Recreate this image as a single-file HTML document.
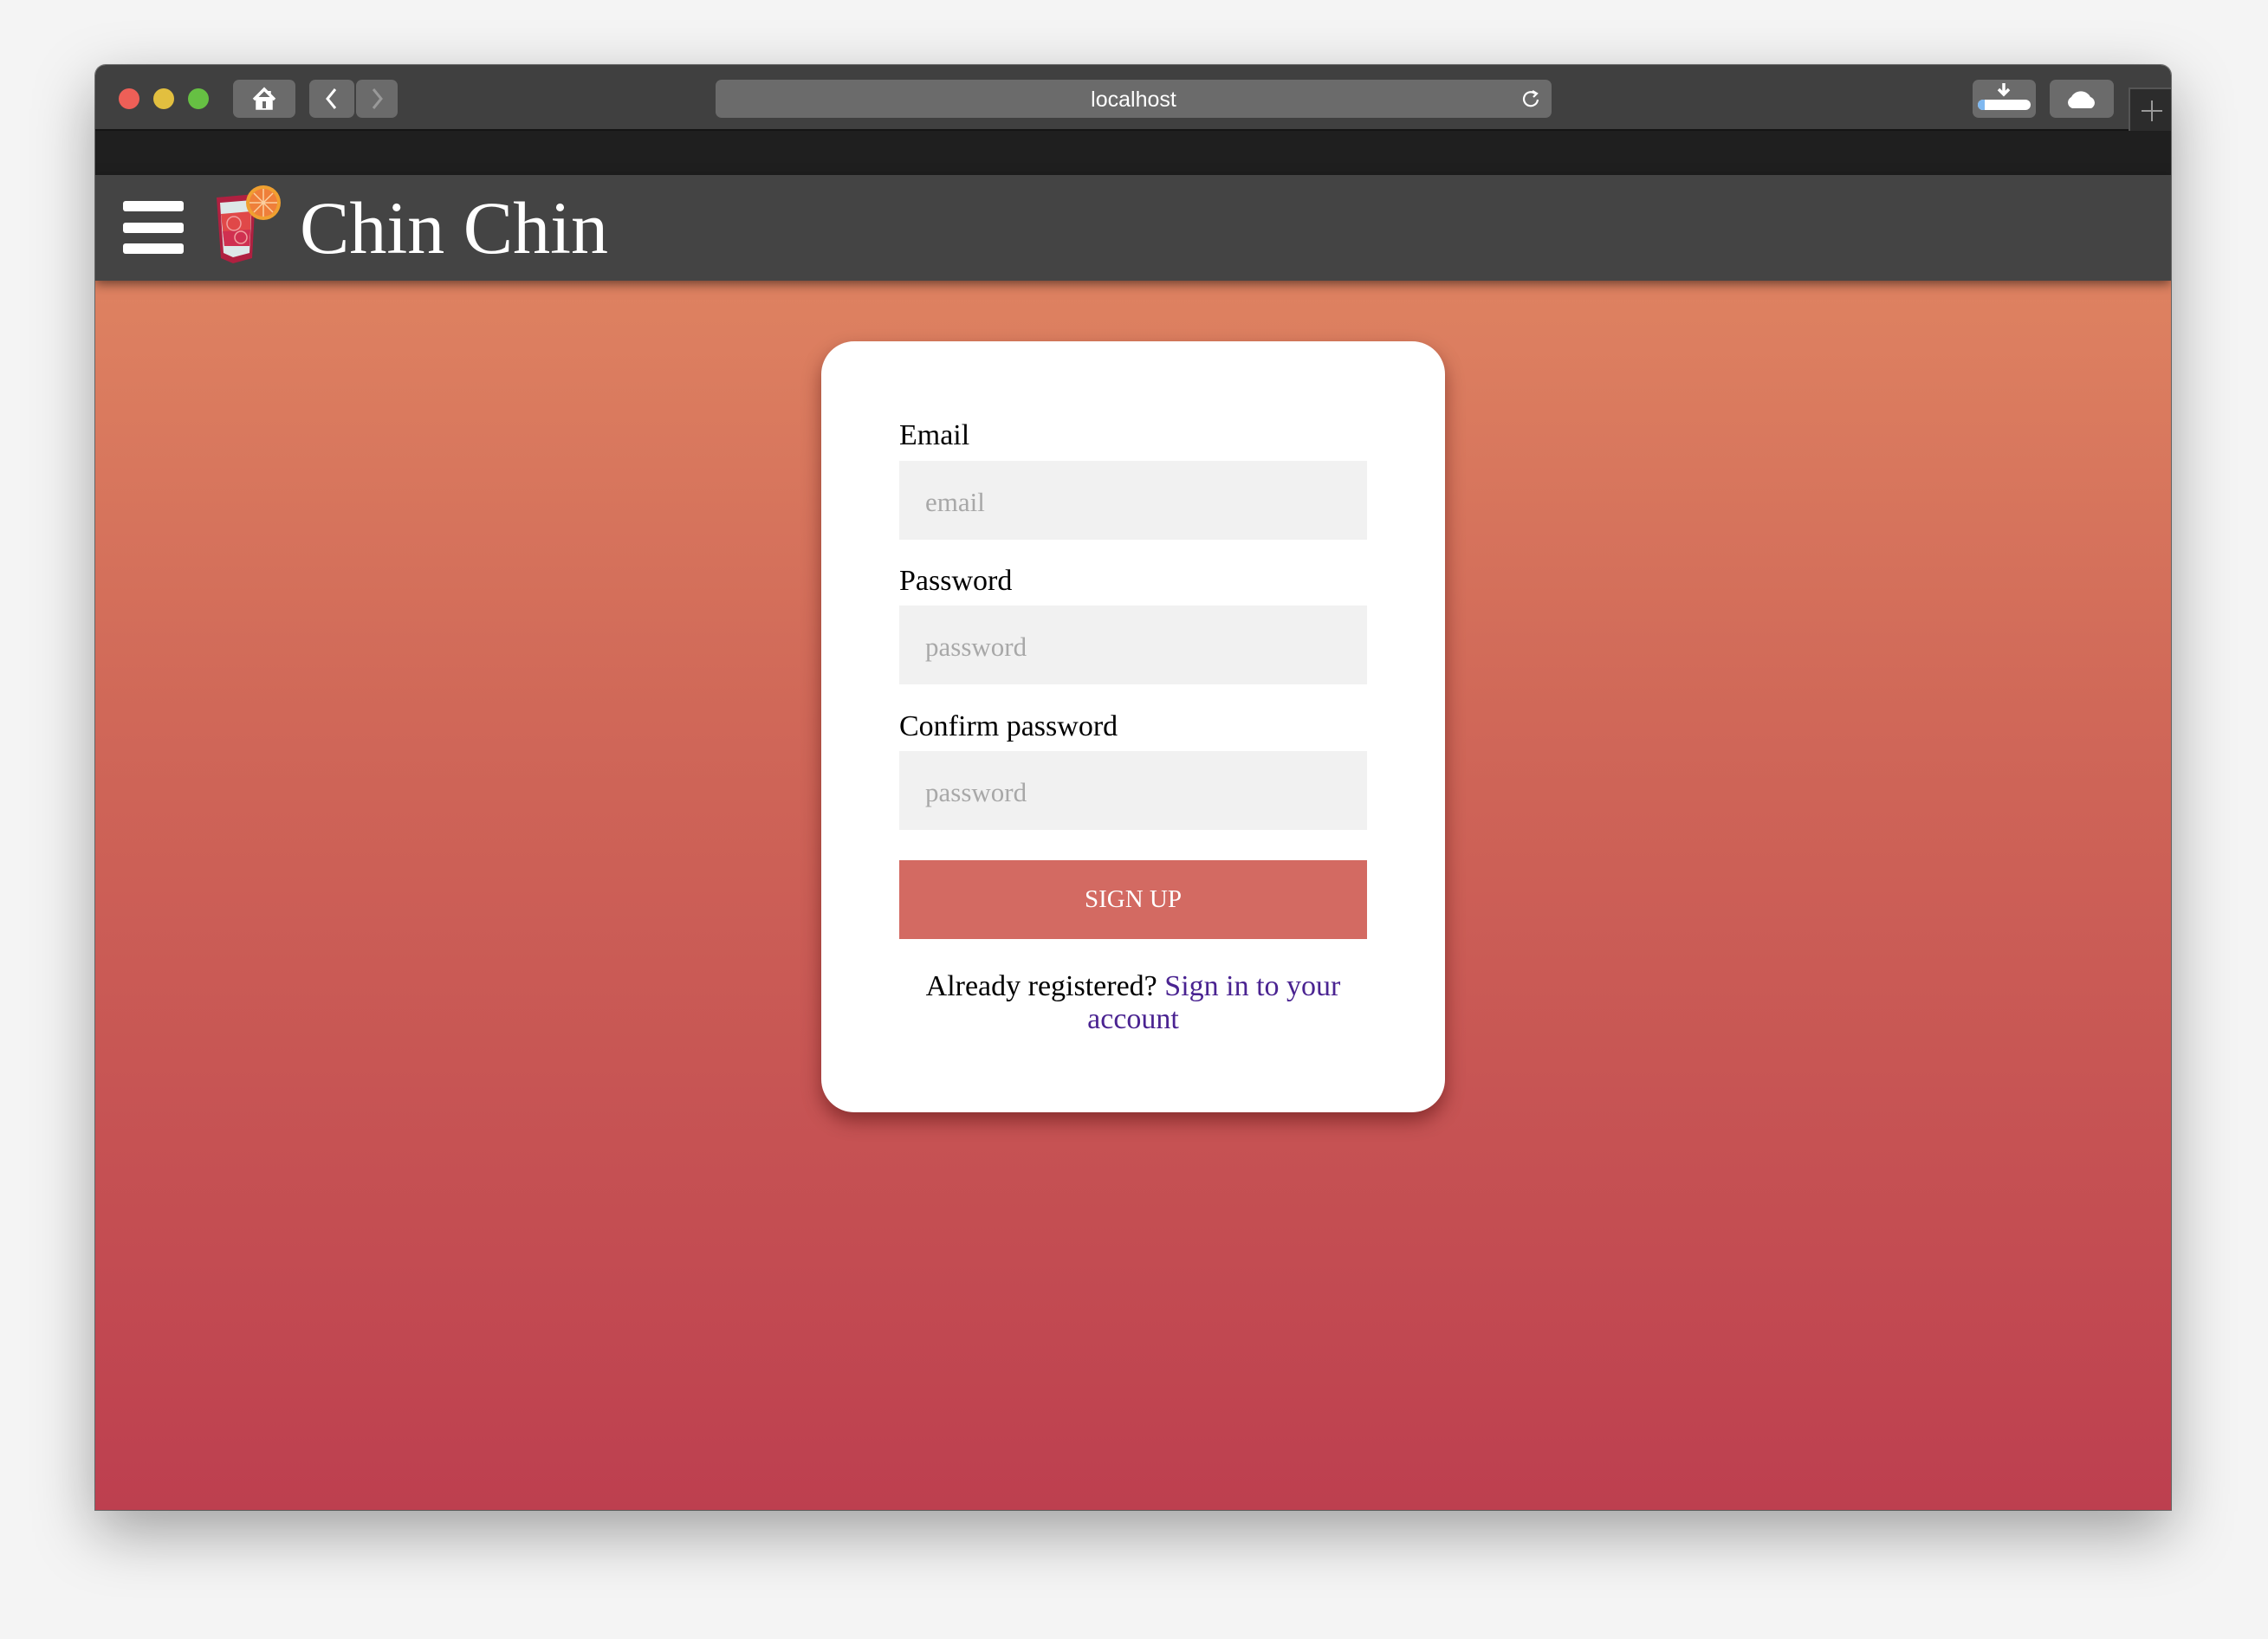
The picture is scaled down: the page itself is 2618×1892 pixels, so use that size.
<!DOCTYPE html>
<html><head><meta charset="utf-8"><style>
*{margin:0;padding:0;box-sizing:border-box}
body{width:2618px;height:1892px;background:#f4f4f4;position:relative;overflow:hidden;font-family:"Liberation Serif",serif}
.win{position:absolute;left:110px;top:75px;width:2396px;height:1668px;border-radius:12px 12px 0 0;overflow:hidden;box-shadow:0 25px 70px rgba(0,0,0,.35),0 0 0 1px rgba(0,0,0,.5)}
.tb{position:absolute;left:0;top:0;width:100%;height:76px;background:#404040;border-bottom:2px solid #151515}
.dot{position:absolute;top:27px;width:24px;height:24px;border-radius:50%}
.btn{position:absolute;top:17px;height:44px;background:#6b6b6b;border-radius:7px}
.black{position:absolute;left:0;top:76px;width:100%;height:51px;background:#1f1f1f}
.hdr{position:absolute;left:0;top:127px;width:100%;height:122px;background:#444;box-shadow:0 4px 12px rgba(0,0,0,.5);z-index:2}
.bg{position:absolute;left:0;top:249px;width:100%;height:1419px;background:linear-gradient(#de8261,#d06858 35%,#bd3f4f)}
.bar{position:absolute;left:32px;width:70px;height:12px;background:#fff;border-radius:3px}
.card{position:absolute;left:838px;top:70px;width:720px;height:890px;background:#fff;border-radius:38px;box-shadow:0 10px 22px rgba(60,0,0,.45)}
.lbl{position:absolute;left:90px;font-size:34px;color:#000}
.inp{position:absolute;left:90px;width:540px;height:91px;background:#f1f1f1;font-size:31px;color:#a8a8a8;padding:30px 0 0 30px}
</style></head><body>
<div class="win">
 <div class="tb">
  <div class="dot" style="left:27px;background:#ee5f57"></div>
  <div class="dot" style="left:67px;background:#e2bf3f"></div>
  <div class="dot" style="left:107px;background:#66c043"></div>
  <div class="btn" style="left:159px;width:72px"><svg width="72" height="44" viewBox="0 0 72 44"><path d="M24 23 L36 11 L48 23 M28 21 V33 H44 V21 M34 33 V26 H38 V33 M42 13 V18" stroke="#fff" stroke-width="3.5" fill="none"/><rect x="28" y="20" width="16" height="13" fill="#fff"/><rect x="34" y="25" width="4" height="8" fill="#6b6b6b"/></svg></div>
  <div class="btn" style="left:247px;width:52px"><svg width="52" height="44"><path d="M30 11 L21 22 L30 33" stroke="#fff" stroke-width="3" fill="none"/></svg></div>
  <div class="btn" style="left:301px;width:48px"><svg width="48" height="44"><path d="M20 11 L29 22 L20 33" stroke="#999" stroke-width="3" fill="none"/></svg></div>
  <div class="btn" style="left:716px;width:965px;font-family:'Liberation Sans',sans-serif;color:#fff;font-size:25px;text-align:center;line-height:46px">localhost<svg style="position:absolute;right:12px;top:10px" width="24" height="24"><path d="M17 6 A8 8 0 1 0 20 13" stroke="#fff" stroke-width="2.2" fill="none"/><path d="M14 3 L19 6 L15 10" stroke="#fff" stroke-width="2.2" fill="none"/></svg></div>
  <div class="btn" style="left:2167px;width:73px"><svg width="73" height="44"><path d="M36 4 V16 M30 11 L36 17 L42 11" stroke="#fff" stroke-width="3.5" fill="none"/><rect x="6" y="23" width="61" height="12" rx="6" fill="#fff"/><path d="M12 23 A6 6 0 0 0 12 35 H14 V23 Z" fill="#7fb8f0"/></svg></div>
  <div class="btn" style="left:2256px;width:74px"><svg width="74" height="44"><path d="M26 33 A7 7 0 0 1 25 20 A12 11 0 0 1 47 20 A7 7 0 0 1 48 33 Z" fill="#fff"/></svg></div>
  <div style="position:absolute;left:2347px;top:26px;width:52px;height:52px;background:#2c2c2c;border-left:2px solid #555;border-top:2px solid #555"><svg width="50" height="50"><path d="M25 13 V37 M13 25 H37" stroke="#999" stroke-width="2"/></svg></div>
 </div>
 <div class="black"></div>
 <div class="hdr">
  <div class="bar" style="top:30px"></div><div class="bar" style="top:55px"></div><div class="bar" style="top:79px"></div>
  <svg style="position:absolute;left:137px;top:10px" width="80" height="96" viewBox="0 0 80 96"><path d="M3 16 L48 12 L44 86 L22 92 L8 86 Z" fill="#b02040"/><path d="M7 22 L44 19 L41 80 L22 85 L11 80 Z" fill="#dde8e8"/><path d="M8 35 L43 32 L41 72 L12 72 Z" fill="#e04848"/><path d="M10 55 L42 53 L41 72 L12 72 Z" fill="#d03050"/><circle cx="23" cy="46" r="8" fill="none" stroke="#f0a0a0" stroke-width="1.5"/><circle cx="31" cy="62" r="7" fill="none" stroke="#f0a0a0" stroke-width="1.5"/><circle cx="57" cy="22" r="20" fill="#f0a030"/><circle cx="57" cy="22" r="16" fill="#ef7f3a"/><path d="M57 6V38M41 22H73M46 11L68 33M68 11L46 33" stroke="#fbd0a0" stroke-width="1.5"/></svg>
  <div style="position:absolute;left:236px;top:6px;font-size:86px;color:#fff;line-height:110px">Chin Chin</div>
 </div>
 <div class="bg">
  <div class="card">
   <div class="lbl" style="top:90px">Email</div>
   <div class="inp" style="top:138px">email</div>
   <div class="lbl" style="top:258px">Password</div>
   <div class="inp" style="top:305px">password</div>
   <div class="lbl" style="top:426px">Confirm password</div>
   <div class="inp" style="top:473px">password</div>
   <div style="position:absolute;left:90px;top:599px;width:540px;height:91px;background:#d36a62;color:#fff;font-size:29px;text-align:center;line-height:91px">SIGN UP</div>
   <div style="position:absolute;left:90px;top:726px;width:540px;text-align:center;font-size:34px;line-height:38px;color:#000">Already registered? <span style="color:#4a2391">Sign in to your account</span></div>
  </div>
 </div>
</div>
</body></html>
